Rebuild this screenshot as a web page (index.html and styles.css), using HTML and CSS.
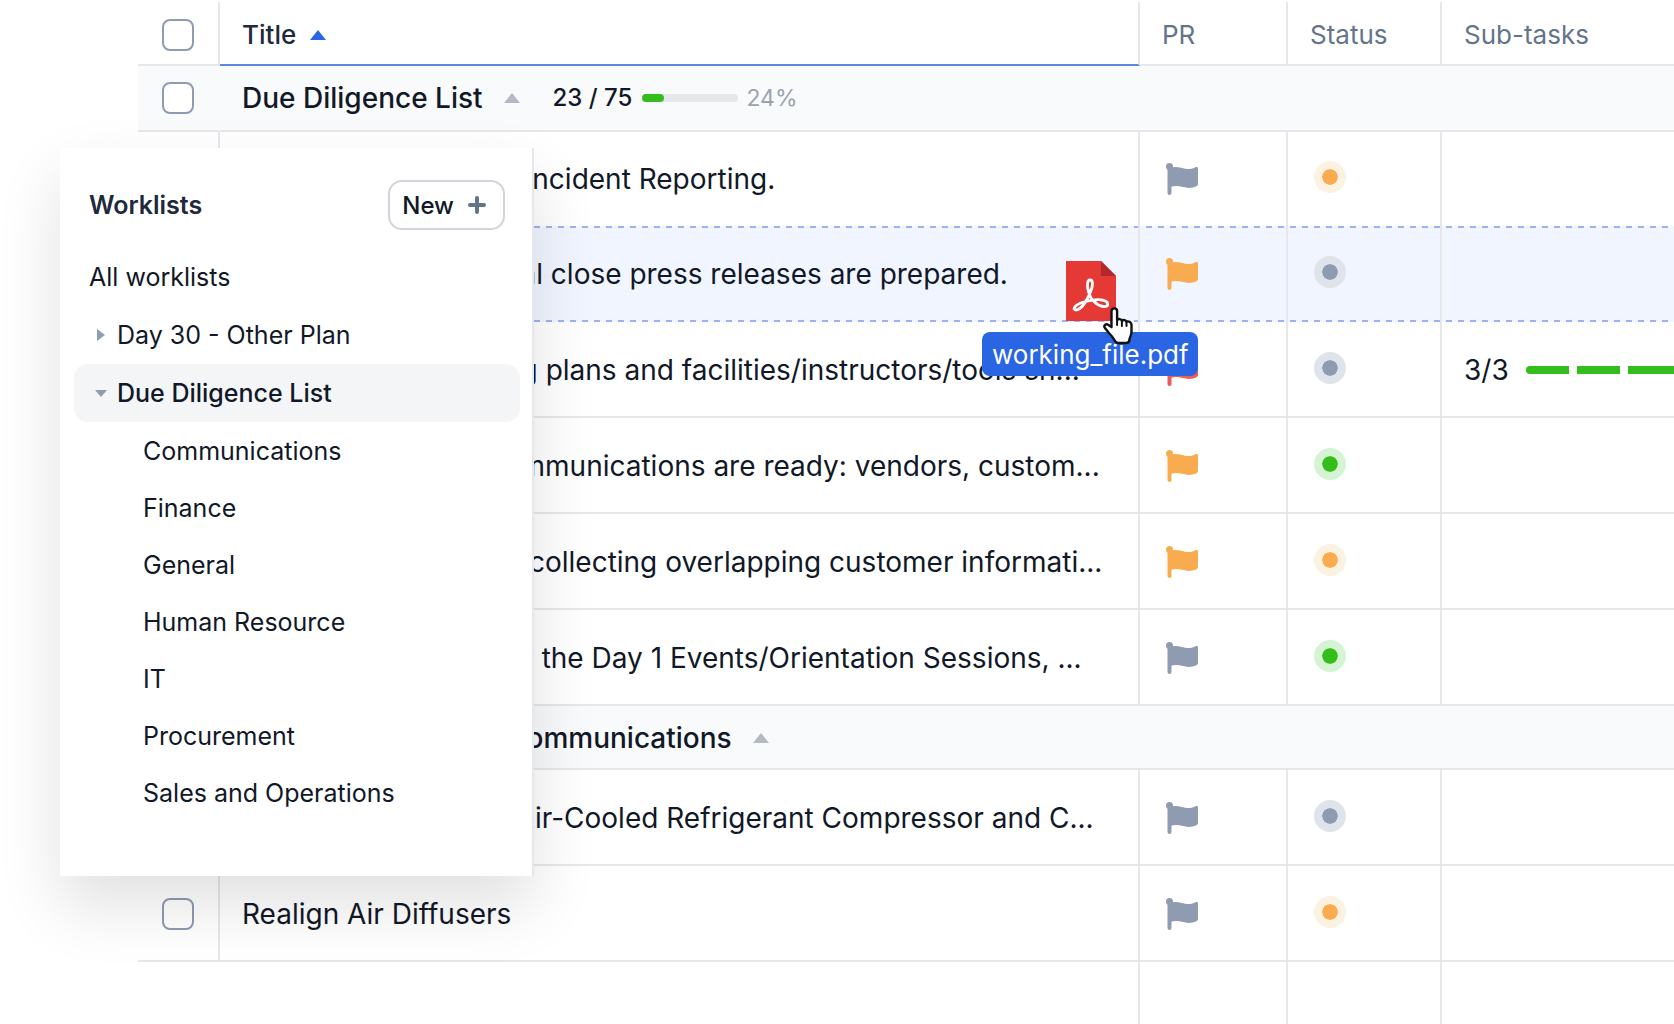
FILE: index.html
```html
<!DOCTYPE html>
<html lang="en">
<head>
    <meta charset="UTF-8">
    <meta name="viewport" content="width=device-width, initial-scale=1.0">
    <title>Worklists</title>
    <link rel="stylesheet" href="styles.css">
</head>
<body>
    <!-- Shared icons -->
    <svg class="sprite" aria-hidden="true">
        <symbol id="flag" viewBox="0 0 32 32">
            <circle cx="3.5" cy="3.5" r="3.5"/>
            <path d="M1.5 3h4v27a2 2 0 0 1-4 0z"/>
            <path d="M5 4.500c4-1 7-.6 11 .5 5 1.400 9 1.200 13-.6 1.500-.7 3-.2 3 1.100v15.500c0 1-.6 1.700-1.600 2.200-4.500 2.200-9 2-13.400.9C12.500 23 9 22.600 5 23.800z"/>
        </symbol>
    </svg>

    <main>
        <table class="tasks">
            <colgroup>
                <col class="col-check">
                <col class="col-title">
                <col class="col-pr">
                <col class="col-status">
                <col>
            </colgroup>
            <thead>
                <tr>
                    <th class="check"><input type="checkbox" aria-label="Select all"></th>
                    <th class="sorted"><div class="line">Title <span class="arrow up blue"></span></div></th>
                    <th>PR</th>
                    <th>Status</th>
                    <th>Sub-tasks</th>
                </tr>
            </thead>
            <tbody>
                <tr class="group group-first">
                    <td class="check"><input type="checkbox" aria-label="Select Due Diligence List"></td>
                    <td colspan="4">
                        <div class="line">
                            <span>Due Diligence List</span>
                            <span class="arrow up"></span>
                            <div class="progress">
                                <span>23 / 75</span>
                                <span class="bar"><span class="bar-fill" style="width: 23%"></span></span>
                                <span class="percent">24%</span>
                            </div>
                        </div>
                    </td>
                </tr>
                <tr class="before-drop">
                    <td class="check"><input type="checkbox" aria-label="Select task"></td>
                    <td>Safety Protocols and Incident Reporting.</td>
                    <td><svg class="flag gray"><use href="#flag"/></svg></td>
                    <td><span class="dot orange"></span></td>
                    <td></td>
                </tr>
                <tr class="drop">
                    <td class="check"><input type="checkbox" aria-label="Select task"></td>
                    <td>Confirm facts and final close press releases are prepared.</td>
                    <td><svg class="flag orange"><use href="#flag"/></svg></td>
                    <td><span class="dot gray"></span></td>
                    <td></td>
                </tr>
                <tr>
                    <td class="check"><input type="checkbox" aria-label="Select task"></td>
                    <td>Determine our training plans and facilities/instructors/tools sh...</td>
                    <td><svg class="flag red"><use href="#flag"/></svg></td>
                    <td><span class="dot gray"></span></td>
                    <td>
                        <div class="line">
                            <span>3/3</span>
                            <div class="steps"><span></span><span></span><span></span></div>
                        </div>
                    </td>
                </tr>
                <tr>
                    <td class="check"><input type="checkbox" aria-label="Select task"></td>
                    <td>Ensure that public communications are ready: vendors, custom...</td>
                    <td><svg class="flag orange"><use href="#flag"/></svg></td>
                    <td><span class="dot green"></span></td>
                    <td></td>
                </tr>
                <tr>
                    <td class="check"><input type="checkbox" aria-label="Select task"></td>
                    <td>Begin this process of collecting overlapping customer informati...</td>
                    <td><svg class="flag orange"><use href="#flag"/></svg></td>
                    <td><span class="dot orange"></span></td>
                    <td></td>
                </tr>
                <tr>
                    <td class="check"><input type="checkbox" aria-label="Select task"></td>
                    <td>Prepare and complete the Day 1 Events/Orientation Sessions, ...</td>
                    <td><svg class="flag gray"><use href="#flag"/></svg></td>
                    <td><span class="dot green"></span></td>
                    <td></td>
                </tr>
                <tr class="group">
                    <td class="check"><input type="checkbox" aria-label="Select Communications"></td>
                    <td colspan="4">
                        <div class="line">
                            <span>Due Diligence List · Communications</span>
                            <span class="arrow up"></span>
                        </div>
                    </td>
                </tr>
                <tr>
                    <td class="check"><input type="checkbox" aria-label="Select task"></td>
                    <td>Install our additional Air-Cooled Refrigerant Compressor and C...</td>
                    <td><svg class="flag gray"><use href="#flag"/></svg></td>
                    <td><span class="dot gray"></span></td>
                    <td></td>
                </tr>
                <tr>
                    <td class="check"><input type="checkbox" aria-label="Select Realign Air Diffusers"></td>
                    <td>Realign Air Diffusers</td>
                    <td><svg class="flag gray"><use href="#flag"/></svg></td>
                    <td><span class="dot orange"></span></td>
                    <td></td>
                </tr>
                <tr class="empty">
                    <td class="check"></td>
                    <td></td>
                    <td></td>
                    <td></td>
                    <td></td>
                </tr>
            </tbody>
        </table>
    </main>

    <!-- Worklists panel over the table -->
    <aside class="panel">
        <div class="panel-header">
            <h2>Worklists</h2>
            <button type="button" class="new-button">
                New
                <svg class="plus" viewBox="0 0 18 18"><path d="M9 2v14M2 9h14"/></svg>
            </button>
        </div>
        <nav>
            <ul class="worklists">
                <li><a href="#">All worklists</a></li>
                <li><a href="#"><span class="toggle"><span class="arrow right"></span></span>Day 30 - Other Plan</a></li>
                <li>
                    <a href="#" class="active"><span class="toggle"><span class="arrow down"></span></span>Due Diligence List</a>
                    <ul class="children">
                        <li><a href="#">Communications</a></li>
                        <li><a href="#">Finance</a></li>
                        <li><a href="#">General</a></li>
                        <li><a href="#">Human Resource</a></li>
                        <li><a href="#">IT</a></li>
                        <li><a href="#">Procurement</a></li>
                        <li><a href="#">Sales and Operations</a></li>
                    </ul>
                </li>
            </ul>
        </nav>
    </aside>

    <!-- File being dragged -->
    <div class="drag">
        <svg class="pdf" viewBox="0 0 50 60">
            <path fill="#e53935" d="M0 0h35l15 15v45H0z"/>
            <path fill="#b3282d" d="M35 0l15 15H35z"/>
            <path fill="none" stroke="#fff" stroke-width="2.800" stroke-linejoin="round" d="M24 19c3.500 0 3 6 .5 12-3 7-9 18-14.500 18-4.500 0-1-6 9.500-8.500 8-2 14-2.500 18-1.200 6.500 2 5 7-.5 6.200-6-.8-12.500-7-14.500-14.500-1.500-6-1.500-12 1.500-12z"/>
        </svg>
        <span class="drag-name">working_file.pdf</span>
        <svg class="hand" viewBox="0 0 30 37">
            <path fill="#fff" stroke="#111" stroke-width="2.400" stroke-linejoin="round" d="M8.500 20V4.200a2.800 2.800 0 0 1 5.600 0V13c1-1.500 4.200-1.200 4.800.8 1.300-1.300 4-.8 4.600 1 1.700-1 5 0 5 3V25c0 3-1.500 5-2 7 0 2.500-.8 4-3 4h-8.300c-1.700 0-2.700-.8-3.500-2.500C10 30 8 28 5.500 25.500L1.800 20.800c-1.500-2 1.200-4.500 3.200-3z"/>
            <path fill="none" stroke="#111" stroke-width="2" stroke-linecap="round" d="M14.100 12v6M18.900 14v5M23.500 15v4"/>
        </svg>
    </div>
</body>
</html>
```

FILE: styles.css
```css
* {
    box-sizing: border-box;
}

body {
    margin: 0;
    padding-top: 2px;
    position: relative;
    min-height: 100vh;
    overflow: hidden;
    background-color: #fff;
    color: #111827;
    font-family: Inter, "Liberation Sans", sans-serif;
    font-size: 28px;
    line-height: 36px;
}

.sprite {
    position: absolute;
    width: 0;
    height: 0;
}

main {
    padding-left: 138px;
}

/* Task table */
.tasks {
    width: 100%;
    height: calc(100vh - 2px);
    table-layout: fixed;
    border-collapse: separate;
    border-spacing: 0;
}

.col-check {
    width: 82px;
}

.col-title {
    width: 920px;
}

.col-pr {
    width: 148px;
}

.col-status {
    width: 154px;
}

.tasks th,
.tasks td {
    height: 96px;
    padding: 2px 0 0 22px;
    border-right: 2px solid #e5e7eb;
    border-bottom: 2px solid #e5e7eb;
    text-align: left;
    vertical-align: middle;
    white-space: nowrap;
    overflow: hidden;
}

.tasks th:last-child,
.tasks td:last-child {
    border-right: none;
}

.tasks th {
    height: 64px;
    padding-top: 3px;
    color: #64748b;
    font-size: 26px;
    font-weight: 400;
}

.tasks th.sorted {
    color: #1e293b;
    font-weight: 500;
    border-bottom-color: #5b8ae0;
}

.tasks .check {
    padding-left: 0;
}

.check input {
    appearance: none;
    display: block;
    width: 32px;
    height: 32px;
    margin: 0 auto;
    border: 2px solid #8f9bb3;
    border-radius: 8px;
}

.line {
    display: flex;
    align-items: center;
}

.arrow {
    border: 8px solid transparent;
}

.arrow.up {
    border-top: none;
    border-bottom: 10px solid #b4b9c4;
    margin-left: 21px;
}

.arrow.up.blue {
    border-bottom-color: #2a66e0;
    margin-left: 14px;
}

.arrow.right {
    border-width: 6px 0 6px 8px;
    border-left-color: #8f9bb3;
}

.arrow.down {
    border-width: 7px 6px 0;
    border-top-color: #8f9bb3;
}

.tasks .group td {
    height: 64px;
    border-right-color: transparent;
    background-color: #f8fafc;
    font-weight: 500;
}

.tasks .group-first td {
    height: 66px;
    padding-top: 0;
}

.group input {
    background-color: #fff;
}

.progress {
    display: flex;
    align-items: center;
    margin-left: 33px;
    font-size: 24px;
}

.bar {
    width: 96px;
    height: 8px;
    margin: 0 8px 0 10px;
    border-radius: 4px;
    background-color: #e5e7eb;
}

.bar-fill {
    display: block;
    height: 8px;
    border-radius: 4px;
    background-color: #34be1e;
}

.percent {
    color: #9ca3af;
    font-size: 23px;
    font-weight: 400;
}

/* Row under the dragged file, dashed on both edges */
.tasks .before-drop td {
    height: 94px;
    padding-top: 0;
    border-bottom: none;
}

.tasks .drop {
    background:
        repeating-linear-gradient(to right, #9db2f0 0 6px, transparent 6px 12px) top / 100% 2px no-repeat,
        repeating-linear-gradient(to right, #9db2f0 0 6px, transparent 6px 12px) bottom / 100% 2px no-repeat,
        #f0f5ff;
}

.tasks .drop td {
    padding-top: 0;
    border-bottom: none;
}

.tasks .empty td {
    height: auto;
    border-bottom: none;
}

.tasks .empty .check {
    border-right: none;
}

.flag {
    display: block;
    width: 32px;
    height: 32px;
    margin-left: 4px;
}

.flag.gray {
    fill: #8f9bb0;
}

.flag.orange {
    fill: #f9ab50;
}

.flag.red {
    fill: #ee5a5a;
}

.dot {
    display: block;
    width: 32px;
    height: 32px;
    margin: 0 0 4px 4px;
    border: 8px solid;
    border-radius: 50%;
}

.dot.gray {
    background-color: #8f9bb0;
    border-color: #dfe3ea;
    background-clip: padding-box;
}

.dot.orange {
    background-color: #f9ab50;
    border-color: #fdf2e2;
    background-clip: padding-box;
}

.dot.green {
    background-color: #34be1e;
    border-color: #d5f4d3;
    background-clip: padding-box;
}

.steps {
    display: flex;
    gap: 8px;
    margin-left: 17px;
}

.steps span {
    width: 43px;
    height: 8px;
    background-color: #34be1e;
}

.steps span:first-child {
    border-radius: 4px 0 0 4px;
}

.steps span:last-child {
    width: 52px;
    border-radius: 0 4px 4px 0;
}

/* Worklists panel */
.panel {
    position: absolute;
    top: 148px;
    left: 60px;
    width: 474px;
    padding: 32px 12px 55px 14px;
    border-right: 2px solid #e5e7eb;
    background-color: #fff;
    box-shadow: 0 30px 60px rgba(0, 0, 0, 0.12);
    font-size: 25px;
}

.panel-header {
    display: flex;
    align-items: center;
    justify-content: space-between;
    padding: 0 15px;
    margin-bottom: 18px;
}

.panel h2 {
    margin: 0;
    color: #1e293b;
    font-size: 25px;
    font-weight: 600;
}

.new-button {
    display: flex;
    align-items: center;
    gap: 14px;
    height: 50px;
    padding: 0 17px 0 12px;
    border: 2px solid #d1d5db;
    border-radius: 14px;
    background-color: #fff;
    color: #111827;
    font-family: inherit;
    font-size: 24px;
    font-weight: 500;
}

.plus {
    width: 18px;
    height: 18px;
    fill: none;
    stroke: #64748b;
    stroke-width: 4;
    stroke-linecap: round;
}

.worklists,
.worklists ul {
    margin: 0;
    padding: 0;
    list-style: none;
}

.worklists a {
    display: flex;
    align-items: center;
    height: 58px;
    padding-left: 15px;
    border-radius: 14px;
    color: #111827;
    text-decoration: none;
}

.worklists a.active {
    background-color: #f3f5f7;
    font-weight: 500;
}

.worklists .children a {
    height: 57px;
    padding-left: 69px;
}

.toggle {
    display: flex;
    justify-content: center;
    width: 12px;
    margin: 0 10px 0 6px;
}

/* Dragged file */
.drag {
    position: absolute;
    top: 261px;
    left: 982px;
    display: flex;
    flex-direction: column;
    align-items: flex-start;
}

.pdf {
    width: 50px;
    height: 60px;
    margin: 0 0 11px 84px;
}

.drag-name {
    padding: 1px 9px 0 10px;
    border-radius: 8px;
    background-color: #2a65e3;
    color: #fff;
    font-size: 26px;
    line-height: 43px;
}

.hand {
    position: absolute;
    top: 46px;
    left: 121px;
    width: 30px;
    height: 37px;
    overflow: visible;
}
```
